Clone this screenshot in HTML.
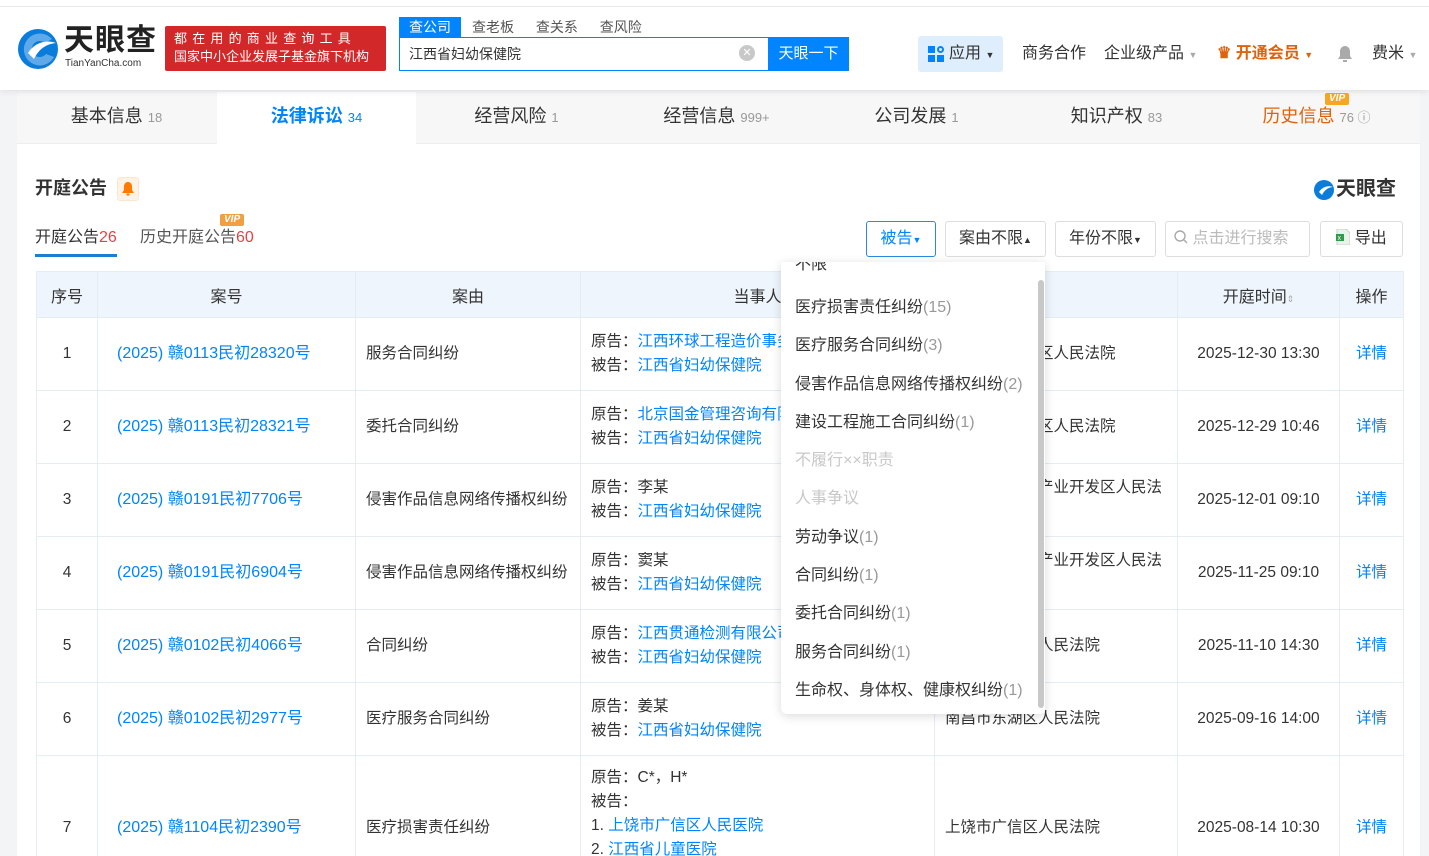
<!DOCTYPE html>
<html><head><meta charset="utf-8"><style>
*{margin:0;padding:0;box-sizing:border-box}
html{overflow:hidden;height:856px}
body{width:1429px;height:856px;overflow:hidden;background:#f3f4f6;font-family:"Liberation Sans","Noto Sans CJK SC",sans-serif;color:#333;position:relative}
.abs{position:absolute}
.hdr{left:0;top:0;width:1429px;height:90px;background:#fff;box-shadow:0 2px 6px rgba(0,0,0,.08);z-index:2}
.card{left:17px;top:92px;width:1403px;height:770px;background:#fff}
.tabs{left:17px;top:92px;width:1403px;height:52px;background:#f7f7f7;border-bottom:1px solid #eee}
.tab{position:absolute;top:0;height:52px;line-height:48px;text-align:center;font-size:18px;color:#333;width:199px}
.tab small{font-size:13px;color:#999}
table{position:absolute;left:36px;top:271px;width:1367px;border-collapse:collapse;font-size:15.5px;table-layout:fixed}
td,th{border:1px solid #e4ecf4;padding:0 10px;vertical-align:middle;white-space:nowrap;overflow:hidden}
th{background:#eef5fc;font-weight:normal;height:46px;font-size:16px}
td{height:73px;line-height:24px}
.c{text-align:center}
.n{padding-left:19px;font-size:16px}
a{color:#0084ff;text-decoration:none}
.btn{position:absolute;top:221px;height:36px;border:1px solid #ddd;border-radius:3px;font-size:16px;line-height:34px;text-align:center;background:#fff}
.dd{left:781px;top:262px;width:264px;height:452px;background:#fff;box-shadow:0 2px 10px rgba(0,0,0,.15);border-radius:0 0 6px 6px;z-index:5;overflow:hidden}
.dd div{height:38.3px;line-height:38px;padding-left:14px;font-size:16px;color:#333}
.dd span{color:#999}
.dd .g{color:#c8c8c8}
</style></head><body>
<div class="abs hdr">
 <div class="abs" style="left:0;top:6px;width:1429px;height:1px;background:#e8e8e8"></div>
 <svg class="abs" style="left:16px;top:27px" width="44" height="44" viewBox="0 0 44 44"><circle cx="22" cy="22" r="20" fill="#0a7cdc"/><path d="M36 12A16 16 0 1 0 38 30L30 27A8 8 0 1 1 29 16Z" fill="#fff" opacity=".35"/><path d="M12 26c6-10 18-14 28-10-10 1-17 6-22 16z" fill="#fff"/></svg>
 <div class="abs" style="left:64px;top:24px;font-size:30px;font-weight:bold;color:#222;letter-spacing:1px;line-height:34px">天眼查</div>
 <div class="abs" style="left:65px;top:58px;font-size:10px;color:#333;line-height:11px">TianYanCha.com</div>
 <div class="abs" style="left:165px;top:26px;width:221px;height:45px;background:#d3282a;border-radius:2px;color:#fff;font-size:13px;line-height:18px;padding:4px 0 0 9px;white-space:nowrap"><div style="letter-spacing:5.2px">都在用的商业查询工具</div><div>国家中小企业发展子基金旗下机构</div></div>
 <div class="abs" style="left:399px;top:17px;width:62px;height:21px;background:#0084ff;color:#fff;font-size:14px;text-align:center;line-height:20px">查公司</div>
 <div class="abs" style="left:472px;top:17px;font-size:14px;color:#555;word-spacing:18px;line-height:20px">查老板 查关系 查风险</div>
 <div class="abs" style="left:399px;top:37px;width:450px;height:34px;border:1px solid #0084ff;background:#fff"></div>
 <div class="abs" style="left:409px;top:45px;font-size:14px;line-height:18px">江西省妇幼保健院</div>
 <div class="abs" style="left:739px;top:45px;width:16px;height:16px;border-radius:50%;background:#c8c8c8;color:#fff;font-size:11px;text-align:center;line-height:16px">✕</div>
 <div class="abs" style="left:768px;top:37px;width:81px;height:34px;background:#0084ff;color:#fff;font-size:15px;text-align:center;line-height:34px">天眼一下</div>
 <div class="abs" style="left:918px;top:36px;width:85px;height:36px;background:#dfeefd;border-radius:3px"></div>
 <div class="abs" style="left:928px;top:46px;width:16px;height:16px"><i class="abs" style="left:0;top:0;width:7px;height:7px;background:#0084ff"></i><i class="abs" style="left:9px;top:0;width:7px;height:7px;border:2px solid #0084ff;border-radius:50%"></i><i class="abs" style="left:0;top:9px;width:7px;height:7px;background:#0084ff"></i><i class="abs" style="left:9px;top:9px;width:7px;height:7px;background:#0084ff"></i></div>
 <div class="abs" style="left:949px;top:44px;font-size:16px;line-height:20px">应用 <span style="font-size:9px">▼</span></div>
 <div class="abs" style="left:1022px;top:44px;font-size:16px;line-height:20px">商务合作</div>
 <div class="abs" style="left:1104px;top:44px;font-size:16px;line-height:20px">企业级产品 <span style="font-size:9px;color:#aaa">▼</span></div>
 <div class="abs" style="left:1217px;top:44px;font-size:16px;line-height:20px;color:#e0620d;font-weight:bold">♛ 开通会员 <span style="font-size:9px">▼</span></div>
 <svg class="abs" style="left:1337px;top:45px" width="16" height="18" viewBox="0 0 16 18"><path d="M8 1c-3 0-5 2.5-5 5.5V11l-2 3h14l-2-3V6.5C13 3.5 11 1 8 1z" fill="#aaa"/><rect x="6" y="15" width="4" height="2" fill="#aaa"/></svg>
 <div class="abs" style="left:1372px;top:44px;font-size:16px;line-height:20px">费米 <span style="font-size:9px;color:#aaa">▼</span></div>
</div>
<div class="abs card"></div>
<div class="abs tabs">
 <div class="tab" style="left:0">基本信息 <small>18</small></div>
 <div class="tab" style="left:200px;background:#fff;color:#0084ff;font-weight:bold">法律诉讼 <small style="color:#0084ff;font-weight:normal">34</small></div>
 <div class="tab" style="left:400px">经营风险 <small>1</small></div>
 <div class="tab" style="left:600px">经营信息 <small>999+</small></div>
 <div class="tab" style="left:800px">公司发展 <small>1</small></div>
 <div class="tab" style="left:1000px">知识产权 <small>83</small></div>
 <div class="tab" style="left:1200px;color:#e0620d">历史信息 <small>76 ⓘ</small></div>
 <div class="abs" style="left:1308px;top:1px;background:#f5a623;color:#fff;font-size:10px;font-weight:bold;font-style:italic;padding:0 4px;border-radius:2px;line-height:12px">VIP</div>
</div>
<div class="abs" style="left:35px;top:177px;font-size:18px;font-weight:bold;line-height:22px">开庭公告</div>
<div class="abs" style="left:117px;top:177px;width:22px;height:24px;background:#fff3e6;border-radius:3px;border:1px solid #fde6cc"></div>
<svg class="abs" style="left:122px;top:182px" width="12" height="14" viewBox="0 0 12 14"><path d="M6 0c-2.5 0-4 2-4 4.5V8L0 11h12l-2-3V4.5C10 2 8.5 0 6 0z" fill="#ff7a00"/><rect x="4.5" y="11.5" width="3" height="2" fill="#ff7a00"/></svg>
<svg class="abs" style="left:1313px;top:179px" width="22" height="22" viewBox="0 0 44 44"><circle cx="22" cy="22" r="20" fill="#0a7cdc"/><path d="M12 26c6-10 18-14 28-10-10 1-17 6-22 16z" fill="#fff"/></svg>
<div class="abs" style="left:1336px;top:177px;font-size:20px;font-weight:bold;color:#333;line-height:24px">天眼查</div>
<div class="abs" style="left:35px;top:228px;font-size:16px;line-height:20px">开庭公告<span style="color:#e04545">26</span></div>
<div class="abs" style="left:35px;top:254px;width:82px;height:3px;background:#1a7fd4"></div>
<div class="abs" style="left:140px;top:228px;font-size:16px;color:#555;line-height:20px">历史开庭公告<span style="color:#e04545">60</span></div>
<div class="abs" style="left:220px;top:214px;background:#f0a040;color:#fff;font-size:10px;font-weight:bold;font-style:italic;padding:0 4px;border-radius:2px;line-height:12px">VIP</div>
<div class="btn" style="left:866px;width:70px;border-color:#2a8ae0;color:#0084ff">被告<span style="font-size:9px">▼</span></div>
<div class="btn" style="left:945px;width:101px">案由不限<span style="font-size:9px">▲</span></div>
<div class="btn" style="left:1055px;width:101px">年份不限<span style="font-size:9px">▼</span></div>
<div class="btn" style="left:1165px;width:145px;color:#bbb;text-align:left;padding-left:8px"><svg width="14" height="14" viewBox="0 0 14 14" style="vertical-align:-1px"><circle cx="6" cy="6" r="5" fill="none" stroke="#aaa" stroke-width="1.4"/><path d="M9.5 9.5L13 13" stroke="#aaa" stroke-width="1.4"/></svg> 点击进行搜索</div>
<div class="btn" style="left:1320px;width:83px"><svg width="14" height="16" viewBox="0 0 14 16" style="vertical-align:-2px"><path d="M1 0h9l4 4v12H1z" fill="#e8f3ea" stroke="#ccc"/><rect x="0" y="5" width="8" height="7" fill="#2f9a4a"/><text x="1.5" y="11" font-size="7" fill="#fff" font-family="Liberation Sans">x</text></svg> 导出</div>
<table>
<colgroup><col style="width:61px"><col style="width:258px"><col style="width:225px"><col style="width:354px"><col style="width:243px"><col style="width:162px"><col style="width:64px"></colgroup>
<tr><th>序号</th><th>案号</th><th>案由</th><th>当事人</th><th style="text-align:left">法院</th><th>开庭时间<span style="font-size:9px;color:#aaa">⇕</span></th><th>操作</th></tr>
<tr><td class="c">1</td><td class="n"><a>(2025) 赣0113民初28320号</a></td><td>服务合同纠纷</td><td>原告：<a>江西环球工程造价事务所</a><br>被告：<a>江西省妇幼保健院</a></td><td>南昌市红谷滩区人民法院</td><td class="c">2025-12-30 13:30</td><td class="c"><a>详情</a></td></tr>
<tr><td class="c">2</td><td class="n"><a>(2025) 赣0113民初28321号</a></td><td>委托合同纠纷</td><td>原告：<a>北京国金管理咨询有限公司</a><br>被告：<a>江西省妇幼保健院</a></td><td>南昌市红谷滩区人民法院</td><td class="c">2025-12-29 10:46</td><td class="c"><a>详情</a></td></tr>
<tr><td class="c">3</td><td class="n"><a>(2025) 赣0191民初7706号</a></td><td>侵害作品信息网络传播权纠纷</td><td>原告：李某<br>被告：<a>江西省妇幼保健院</a></td><td style="white-space:normal">南昌经济技术产业开发区人民法院</td><td class="c">2025-12-01 09:10</td><td class="c"><a>详情</a></td></tr>
<tr><td class="c">4</td><td class="n"><a>(2025) 赣0191民初6904号</a></td><td>侵害作品信息网络传播权纠纷</td><td>原告：窦某<br>被告：<a>江西省妇幼保健院</a></td><td style="white-space:normal">南昌经济技术产业开发区人民法院</td><td class="c">2025-11-25 09:10</td><td class="c"><a>详情</a></td></tr>
<tr><td class="c">5</td><td class="n"><a>(2025) 赣0102民初4066号</a></td><td>合同纠纷</td><td>原告：<a>江西贯通检测有限公司</a><br>被告：<a>江西省妇幼保健院</a></td><td>南昌市东湖区人民法院</td><td class="c">2025-11-10 14:30</td><td class="c"><a>详情</a></td></tr>
<tr><td class="c">6</td><td class="n"><a>(2025) 赣0102民初2977号</a></td><td>医疗服务合同纠纷</td><td>原告：姜某<br>被告：<a>江西省妇幼保健院</a></td><td>南昌市东湖区人民法院</td><td class="c">2025-09-16 14:00</td><td class="c"><a>详情</a></td></tr>
<tr><td class="c" style="height:144px">7</td><td class="n"><a>(2025) 赣1104民初2390号</a></td><td>医疗损害责任纠纷</td><td style="vertical-align:top;padding-top:10px">原告：C*，H*<br>被告：<br>1. <a>上饶市广信区人民医院</a><br>2. <a>江西省儿童医院</a></td><td>上饶市广信区人民法院</td><td class="c">2025-08-14 10:30</td><td class="c"><a>详情</a></td></tr>
</table>
<div class="abs dd">
 <div style="height:14px;line-height:14px;margin-top:-4px;overflow:hidden">不限</div>
 <div style="margin-top:17px">医疗损害责任纠纷<span>(15)</span></div>
 <div>医疗服务合同纠纷<span>(3)</span></div>
 <div>侵害作品信息网络传播权纠纷<span>(2)</span></div>
 <div>建设工程施工合同纠纷<span>(1)</span></div>
 <div class="g">不履行××职责</div>
 <div class="g">人事争议</div>
 <div>劳动争议<span>(1)</span></div>
 <div>合同纠纷<span>(1)</span></div>
 <div>委托合同纠纷<span>(1)</span></div>
 <div>服务合同纠纷<span>(1)</span></div>
 <div>生命权、身体权、健康权纠纷<span>(1)</span></div>
 <i class="abs" style="left:257px;top:18px;width:6px;height:428px;background:#c8c8c8;border-radius:3px"></i>
</div>
</body></html>
